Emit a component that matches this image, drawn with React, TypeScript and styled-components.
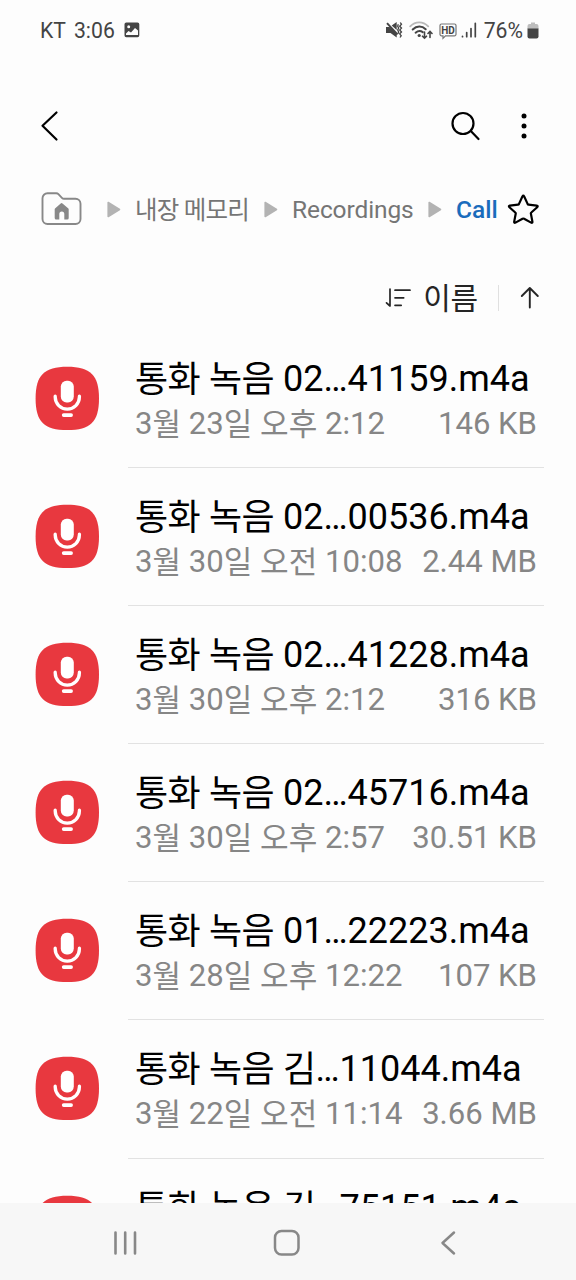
import React from 'react';
import styled, { createGlobalStyle } from 'styled-components';

const GlobalStyle = createGlobalStyle`
  * { box-sizing: border-box; }
  body { margin: 0; background: #fdfdfd; }
`;

const Screen = styled.div`
  width: 576px;
  height: 1280px;
  display: flex;
  flex-direction: column;
  overflow: hidden;
  background: #fdfdfd;
  color: #000;
  font-family: Roboto, 'Noto Sans CJK KR', sans-serif;
  white-space: nowrap;
  svg { display: block; flex: none; }
`;

const Hangul = styled.span`
  line-height: 0;
  vertical-align: -1px;
`;

const StatusBar = styled.header`
  height: 60px;
  flex: none;
  display: flex;
  align-items: center;
  justify-content: space-between;
  padding: 1px 37px 0 40px;
  color: #444;
  font-size: 21.2px;
  line-height: 24px;
`;

const StatusGroup = styled.div<{ $gap: number }>`
  display: flex;
  align-items: center;
  gap: ${(p) => p.$gap}px;
`;

const BatteryLevel = styled.span`
  padding-left: 3px;
`;

const WifiSvg = styled.svg`
  margin: 0 2px;
`;

const Toolbar = styled.div`
  height: 132px;
  flex: none;
  display: flex;
  align-items: center;
  padding: 0 47px 0 38px;
`;

const ToolbarActions = styled.div`
  display: flex;
  align-items: center;
  margin-left: auto;
  gap: 38px;
`;

const Breadcrumb = styled.nav`
  height: 36px;
  flex: none;
  display: flex;
  align-items: center;
  padding: 0 33px 0 41px;
  font-size: 24.5px;
  line-height: 30px;
`;

const Crumb = styled.span<{ $active?: boolean; $width: number; $spacing?: number }>`
  width: ${(p) => p.$width}px;
  flex: none;
  color: ${(p) => (p.$active ? '#1a6cbc' : '#757575')};
  font-weight: ${(p) => (p.$active ? 500 : 400)};
  letter-spacing: ${(p) => p.$spacing ?? 0}px;
`;

const CrumbArrow = styled.svg<{ $before: number; $after: number }>`
  margin: 0 ${(p) => p.$after}px 0 ${(p) => p.$before}px;
`;

const SortBar = styled.div`
  height: 102px;
  flex: none;
  display: flex;
  align-items: center;
  justify-content: flex-end;
  padding: 37px 36px 0 0;
  color: #252525;
`;

const SortLabel = styled.span`
  margin: 0 20px 0 12px;
  font-size: 30px;
  line-height: 36px;
  letter-spacing: -0.2px;
`;

const SortDivider = styled.span`
  width: 1px;
  height: 26px;
  margin-right: 21px;
  background: #e0e0e0;
`;

const FileList = styled.main`
  flex: 1;
  min-height: 0;
  overflow: hidden;
`;

const FileRow = styled.article`
  height: 138.1px;
  display: flex;
  padding: 0 32px 0 35px;
`;

const FileIcon = styled.svg`
  margin-top: 36px;
`;

const FileBody = styled.div`
  flex: 1;
  margin-left: 28px;
  padding: 27px 7px 0;
  border-bottom: 1px solid #e2e2e2;
`;

const FileName = styled.div`
  height: 44px;
  font-size: 36px;
  line-height: 44px;
  ${Hangul} { letter-spacing: -0.6px; }
`;

const FileMeta = styled.div`
  display: flex;
  justify-content: space-between;
  height: 46px;
  color: #868686;
  font-size: 31.1px;
  line-height: 46px;
`;

const NavBar = styled.footer`
  height: 77px;
  flex: none;
  display: flex;
  align-items: center;
  justify-content: space-between;
  padding: 2px 119px 0 112px;
  background: #f7f7f7;
`;

const HomeButton = styled.svg`
  margin-right: 4px;
`;

interface RecordingFile {
  name: string;
  date?: string;
  size?: string;
}

const files: RecordingFile[] = [
  { name: '통화 녹음 02…41159.m4a', date: '3월 23일 오후 2:12', size: '146 KB' },
  { name: '통화 녹음 02…00536.m4a', date: '3월 30일 오전 10:08', size: '2.44 MB' },
  { name: '통화 녹음 02…41228.m4a', date: '3월 30일 오후 2:12', size: '316 KB' },
  { name: '통화 녹음 02…45716.m4a', date: '3월 30일 오후 2:57', size: '30.51 KB' },
  { name: '통화 녹음 01…22223.m4a', date: '3월 28일 오후 12:22', size: '107 KB' },
  { name: '통화 녹음 김…11044.m4a', date: '3월 22일 오전 11:14', size: '3.66 MB' },
  { name: '통화 녹음 김…75151.m4a' },
];

// Hangul runs sit slightly lower than the Latin baseline.
const MixedText = ({ children }: { children: string }) => (
  <>
    {children.split(/([가-힣]+)/).map((run, i) => (i % 2 ? <Hangul key={i}>{run}</Hangul> : run))}
  </>
);

const MicIcon = () => (
  <FileIcon width="65" height="65" viewBox="0 0 65 65" fill="none">
    <path d="M32.3 .7C55.5 .7 64 9.2 64 32.4S55.5 64.1 32.3 64.1 .6 55.6 .6 32.4 9.1 .7 32.3 .7Z" fill="#e8383f" />
    <rect x="25.8" y="14.8" width="13" height="21.6" rx="5.8" fill="#fff" />
    <path d="M20.2 30.2v.9a12.100 12 0 0 0 24.200 0v-.9" stroke="#fff" strokeWidth="3.3" strokeLinecap="round" />
    <path d="M28.700 49.100h7.400" stroke="#fff" strokeWidth="3.700" strokeLinecap="round" />
  </FileIcon>
);

const Arrow = ({ before, after }: { before: number; after: number }) => (
  <CrumbArrow $before={before} $after={after} width="14" height="18" viewBox="0 0 14 18">
    <path d="M1.200 1.500v14L12.500 8.500Z" fill="#b3b3b3" stroke="#b3b3b3" strokeWidth="1.600" strokeLinejoin="round" />
  </CrumbArrow>
);

const PictureIcon = () => (
  <svg width="16" height="18" viewBox="0 0 16 18">
    <path fillRule="evenodd" fill="#444" d="M2.300.5h11.200a1.800 1.800 0 0 1 1.800 1.800v11.200a1.800 1.800 0 0 1-1.800 1.800H2.300a1.800 1.800 0 0 1-1.800-1.800V2.300A1.800 1.800 0 0 1 2.300.5ZM2 11.500V13h12v-4.500l-3-2.500-4 4.500-2.500-1.500ZM4.700 3.200a1.500 1.500 0 1 0 0 3 1.500 1.500 0 0 0 0-3Z" />
  </svg>
);

const MuteIcon = () => (
  <svg width="18" height="19" viewBox="0 0 18 19" fill="none" stroke="#444">
    <path d="M1 6h3.500l7.200 6.500V16.500L5.500 12H1Z" fill="#444" stroke="none" />
    <path d="M6.700 4.500 11.700 1v8Z" fill="#444" stroke="none" />
    <path d="m2 2.200 10.500 11.300" strokeWidth="1.900" />
    <path d="m15.300 1.500 1.200 1.800-1.800 1.900 1.800 1.900-1.800 1.900 1.800 2-1.800 1.900 1.500 1.900-1.200 1.700M13.300 3.300l-.6 1.900 1 1.900-1 1.900 1 2-.8 1.700" strokeWidth="1.300" />
  </svg>
);

const WifiIcon = () => (
  <WifiSvg width="24" height="19" viewBox="0 0 24 19" fill="none" strokeLinecap="round">
    <path d="M1.200 5.300c5.200-5.300 12.800-5.300 18 0" stroke="#b8b8b8" strokeWidth="1.900" />
    <path d="M3.700 8.500c4-3.900 9.200-3.900 13-.2M6.600 11.700c2.400-2.100 5-2.200 7.200-.6" stroke="#444" strokeWidth="2" />
    <circle cx="10.200" cy="14.500" r="1.600" fill="#444" />
    <path d="M15.500 11v6.200m-2-2 2 2 2-2M21 16.500V10.500m-2 2 2-2 2 2" stroke="#444" strokeWidth="1.600" />
  </WifiSvg>
);

const HdText = styled.text`
  font: 700 10.500px Roboto, sans-serif;
`;

const HdIcon = () => (
  <svg width="18" height="18" viewBox="0 0 18 18">
    <path d="M2.500 2h13a1.500 1.500 0 0 1 1.500 1.500v8.800a1.500 1.500 0 0 1-1.500 1.500H6.500L4 16.300V13.800H2.500A1.500 1.500 0 0 1 1 12.300V3.500A1.500 1.500 0 0 1 2.500 2Z" fill="none" stroke="#777" strokeWidth="1.200" />
    <HdText x="2.200" y="11.700" textLength="13.600" lengthAdjust="spacingAndGlyphs" fill="#444">HD</HdText>
  </svg>
);

const SignalIcon = () => (
  <svg width="16" height="17" viewBox="0 0 16 17" stroke="#444" strokeWidth="1.700" strokeLinecap="round">
    <path d="M1.500 14.300v.4M5.700 10.500v4.200M10 6.500v8.200M14.300 1.300v13.400" />
  </svg>
);

const BatteryIcon = () => (
  <svg width="12" height="18" viewBox="0 0 12 18">
    <path d="M4 .5h4v1.500h1.500A2 2 0 0 1 11.500 4v3H.5V4a2 2 0 0 1 2-2H4Z" fill="#bdbdbd" />
    <path d="M.5 6.500h11V14.500a2 2 0 0 1-2 2h-7a2 2 0 0 1-2-2Z" fill="#444" />
  </svg>
);

const App: React.FC = () => (
  <Screen>
    <GlobalStyle />
    <StatusBar>
      <StatusGroup $gap={9}>
        <StatusGroup $gap={8}>
          <span>KT</span>
          <span>3:06</span>
        </StatusGroup>
        <PictureIcon />
      </StatusGroup>
      <StatusGroup $gap={4}>
        <MuteIcon />
        <WifiIcon />
        <HdIcon />
        <SignalIcon />
        <BatteryLevel>76%</BatteryLevel>
        <BatteryIcon />
      </StatusGroup>
    </StatusBar>

    <Toolbar>
      <svg width="24" height="34" viewBox="0 0 24 34" fill="none" stroke="#000" strokeWidth="2.200" strokeLinecap="round" strokeLinejoin="round">
        <path d="M18.500 3.500 4.500 16.800 18.500 30.500" />
      </svg>
      <ToolbarActions>
        <svg width="32" height="32" viewBox="0 0 32 32" fill="none" stroke="#000" strokeWidth="2.200" strokeLinecap="round">
          <circle cx="14" cy="13.500" r="10.500" />
          <path d="m21.800 21 7.700 8" />
        </svg>
        <svg width="10" height="30" viewBox="0 0 10 30">
          <circle cx="5" cy="5" r="2.500" />
          <circle cx="5" cy="15" r="2.500" />
          <circle cx="5" cy="25" r="2.500" />
        </svg>
      </ToolbarActions>
    </Toolbar>

    <Breadcrumb>
      <svg width="41" height="36" viewBox="0 0 41 36" fill="none">
        <path d="M6.500 1.300h8.700a3 3 0 0 1 2.200.9l3.500 3.600a3 3 0 0 0 2.200.9H34.500a5 5 0 0 1 5 5v15.300a5 5 0 0 1-5 5h-28a5 5 0 0 1-5-5V6.300a5 5 0 0 1 5-5Z" stroke="#888" strokeWidth="1.900" />
        <path d="M13.700 17.300Q13.700 16.700 14.300 16.200L19.700 11.400Q20.600 10.800 21.500 11.400L27.100 16.200Q27.700 16.700 27.700 17.300V26a1.500 1.500 0 0 1-1.500 1.500H23.300v-5.500a2.500 2.500 0 0 0-5 0v5.500H15.200a1.500 1.500 0 0 1-1.500-1.500Z" fill="#888" />
      </svg>
      <Arrow before={25} after={14} />
      <Crumb $width={116} $spacing={-0.8}>
        <MixedText>내장 메모리</MixedText>
      </Crumb>
      <Arrow before={13} after={14} />
      <Crumb $width={123} $spacing={-0.1}>Recordings</Crumb>
      <Arrow before={13} after={14} />
      <Crumb $active $width={51}>Call</Crumb>
      <svg width="34" height="34" viewBox="0 0 34 34" fill="none">
        <path d="M15.400 3.500Q16.300 1.900 17.200 3.500L20.600 10.900Q20.900 11.500 21.600 11.600L29.700 12.600Q31.400 12.900 30.200 14.200L24.300 19.500Q23.700 20 23.900 20.700L25.400 28.600Q25.600 30.400 24.100 29.600L17.100 25.700Q16.300 25.300 15.500 25.700L8.500 29.600Q7 30.400 7.200 28.600L8.700 20.700Q8.900 20 8.300 19.500L2.400 14.200Q1.200 12.900 2.900 12.600L11 11.600Q11.700 11.500 12 10.900Z" stroke="#000" strokeWidth="2.200" strokeLinejoin="round" />
      </svg>
    </Breadcrumb>

    <SortBar>
      <svg width="27" height="22" viewBox="0 0 27 22" fill="none" stroke="#252525" strokeWidth="1.700" strokeLinecap="round" strokeLinejoin="round">
        <path d="M6 2v17L2.500 15.800M11 3.200H26M11 10.800h8.700M11 18.300h6.200" />
      </svg>
      <SortLabel>
        <MixedText>이름</MixedText>
      </SortLabel>
      <SortDivider />
      <svg width="20" height="24" viewBox="0 0 20 24" fill="none" stroke="#252525" strokeWidth="1.900" strokeLinecap="round" strokeLinejoin="round">
        <path d="M9.800 21.500V2M1.800 10 9.800 2 17.800 10" />
      </svg>
    </SortBar>

    <FileList>
      {files.map((file) => (
        <FileRow key={file.name}>
          <MicIcon />
          <FileBody>
            <FileName>
              <MixedText>{file.name}</MixedText>
            </FileName>
            {file.date && file.size && (
              <FileMeta>
                <span>
                  <MixedText>{file.date}</MixedText>
                </span>
                <span>{file.size}</span>
              </FileMeta>
            )}
          </FileBody>
        </FileRow>
      ))}
    </FileList>

    <NavBar>
      <svg width="26" height="26" viewBox="0 0 26 26" stroke="#888" strokeWidth="2.600" strokeLinecap="round">
        <path d="M3.500 2.500v21M13.200 2.500v21M23 2.500v21" />
      </svg>
      <HomeButton width="28" height="28" viewBox="0 0 28 28" fill="none" stroke="#888" strokeWidth="2.500">
        <rect x="2" y="2" width="23.500" height="23.500" rx="6.500" />
      </HomeButton>
      <svg width="18" height="26" viewBox="0 0 18 26" fill="none" stroke="#888" strokeWidth="2.500" strokeLinecap="round" strokeLinejoin="round">
        <path d="M15 2.500 3.500 13 15 23.500" />
      </svg>
    </NavBar>
  </Screen>
);

export default App;
